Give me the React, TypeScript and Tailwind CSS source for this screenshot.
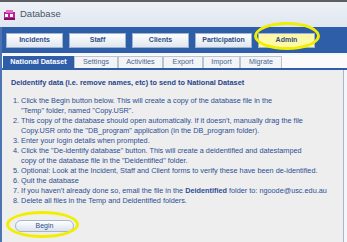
import React from "react";

const navButtons = ["Incidents", "Staff", "Clients", "Participation", "Admin"];
const tabs = [
  { label: "National Dataset", w: "w-[71px]" },
  { label: "Settings", w: "w-[44px]" },
  { label: "Activities", w: "w-[45px]" },
  { label: "Export", w: "w-[40px]" },
  { label: "Import", w: "w-[37px]" },
  { label: "Migrate", w: "w-[42px]" },
];

const AppIcon = () => (
  <svg width="11" height="10" viewBox="0 0 11 10">
    <rect x="0" y="2" width="11" height="8" fill="#c21d9a" />
    <rect x="2" y="0" width="7" height="3" fill="#e06ac4" />
    <rect x="1" y="4" width="3" height="3" fill="#ffffff" />
    <rect x="6" y="4" width="3" height="3" fill="#ffffff" />
    <rect x="0" y="8" width="11" height="2" fill="#7d0f60" />
  </svg>
);

const App = () => {
  return (
    <div className="relative w-[347px] h-[242px] overflow-hidden bg-[#f4f6f9] font-['Liberation_Sans',Arial,sans-serif]">
      <div className="h-[2px] bg-[#5c5f63]" />
      <div className="h-[25px] flex items-center gap-[5px] pl-[4px] bg-gradient-to-b from-[#eef2f7] to-[#dfe6ef]">
        <AppIcon />
        <span className="text-[9.5px] text-[#4a5566]">Database</span>
      </div>

      <div className="border-l-[2px] border-[#4d74b2] h-[215px] flex flex-col">
        <div className="h-[26px] bg-[#2e5ea8] flex items-center gap-[6px] pl-[4px] pr-[4px]">
          {navButtons.map((b) => (
            <div
              key={b}
              className={`w-[57px] h-[15px] flex items-center justify-center text-[7px] font-bold text-[#2d4f86] border border-[#9fb2cf] ${
                b === "Admin" ? "bg-[#fdf9a8]" : "bg-gradient-to-b from-[#ffffff] to-[#dfe6f0]"
              }`}
            >
              {b}
            </div>
          ))}
        </div>

        <div className="h-[13px] bg-[#fbfbfb] flex items-end pl-[1px] mt-[2px]">
          {tabs.map((t, i) => (
            <div
              key={t.label}
              className={`${t.w} h-[12px] flex items-center justify-center text-[7.2px] border border-b-0 ${
                i === 0
                  ? "bg-[#2e5ea8] border-[#2e5ea8] text-white font-bold"
                  : "bg-[#f3f4f6] border-[#b9c3d1] text-[#4a6590]"
              }`}
            >
              {t.label}
            </div>
          ))}
        </div>
        <div className="h-[2px] bg-[#2e5ea8]" />

        <div className="flex-1 bg-[#eeeeee] border-r border-[#a9b7cc] mr-[3px] pl-[9px] pt-[8px]">
          <div className="text-[7.3px] font-bold text-[#26458a] leading-[10px]">
            Deidentify data (i.e. remove names, etc) to send to National Dataset
          </div>
          <ol className="mt-[8px] pl-[2px] text-[7.3px] leading-[10px] text-[#2b4e94] whitespace-nowrap">
            <li>1. Click the Begin button below. This will create a copy of the database file in the</li>
            <li className="pl-[8px]">"Temp" folder, named "Copy.USR".</li>
            <li>2. This copy of the database should open automatically. If it doesn't, manually drag the file</li>
            <li className="pl-[8px]">Copy.USR onto the "DB_program" application (in the DB_program folder).</li>
            <li>3. Enter your login details when prompted.</li>
            <li>4. Click the "De-identify database" button. This will create a deidentified and datestamped</li>
            <li className="pl-[8px]">copy of the database file in the "Deidentified" folder.</li>
            <li>5. Optional: Look at the Incident, Staff and Client forms to verify these have been de-identified.</li>
            <li>6. Quit the database</li>
            <li>
              7. If you haven't already done so, email the file in the <span className="font-bold">Deidentified</span> folder to: ngoode@usc.edu.au
            </li>
            <li>8. Delete all files in the Temp and Deidentified folders.</li>
          </ol>
          <div className="mt-[14px] ml-[4px] w-[59px] h-[12px] rounded-[6px] border border-[#a8b6c8] bg-gradient-to-b from-[#ffffff] to-[#dbe3ee] flex items-center justify-center text-[7px] text-[#2d4f86]">
            Begin
          </div>
        </div>
      </div>

      <div className="absolute left-[254px] top-[22px] w-[66px] h-[28px] rounded-[50%] border-[3px] border-[#f2ee00]" />
      <div className="absolute left-[6px] top-[211px] w-[73px] h-[27px] rounded-[50%] border-[3px] border-[#f2ee00]" />
    </div>
  );
};

export default App;
